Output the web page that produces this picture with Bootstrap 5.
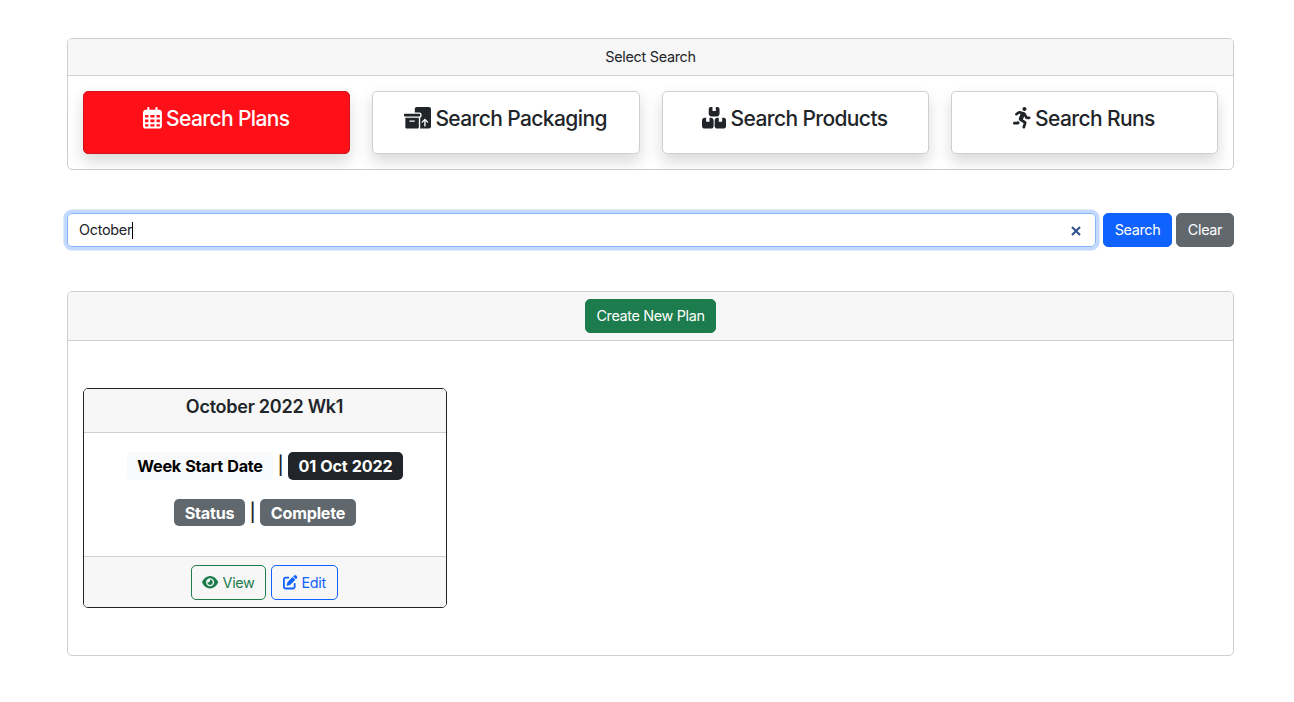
<!DOCTYPE html>
<html lang="en">
<head>
<meta charset="utf-8">
<meta name="viewport" content="width=device-width, initial-scale=1">
<title>Search Plans</title>
<link href="https://cdn.jsdelivr.net/npm/bootstrap@5.3.0/dist/css/bootstrap.min.css" rel="stylesheet">
<style>
  html { font-size: 14.4px; }
  body { font-family: Inter, "Liberation Sans", sans-serif; color: #212529; letter-spacing: -.02em; }
  .page { width: 1167px; margin-left: 67px; padding-top: 38px; }
  .card { --bs-card-border-color: #cfcfcf; --bs-card-cap-bg: #f7f7f7; --bs-card-border-radius: 5px; --bs-card-inner-border-radius: 4px; }
  .select-card { height: 132px; margin-bottom: 43px; }
  .select-card > .card-header { height: 37px; padding: 0; line-height: 36px; }
  .select-card > .card-body { padding: 15px; }
  .select-card .row { --bs-gutter-x: 22px; }
  .tile { height: 63px; padding-top: 14px; font-size: 21px; font-weight: 500; line-height: 26px; letter-spacing: -.029em; white-space: nowrap; box-shadow: 0 7.2px 14.4px rgba(0,0,0,.15); }
  .tile-active { background: #ff1018; color: #fff; border-color: #cf141b; }
  .tile svg { height: 21.6px; margin-top: 1px; fill: currentColor; flex: none; }
  .tile div { gap: 4.5px; padding-right: 1px; }
  .search-bar { gap: 4px; margin-bottom: 44px; }
  .btn { height: 34px; padding: 0; line-height: 32px; border-radius: 5px; letter-spacing: -.024em; transition: none; --bs-btn-font-size: 14.4px; }
  .btn-primary { --bs-btn-bg: #1062fe; --bs-btn-border-color: #1062fe; width: 69px; }
  .btn-secondary { --bs-btn-bg: #60686e; --bs-btn-border-color: #60686e; width: 58px; }
  .btn-success { --bs-btn-bg: #1d7c4d; --bs-btn-border-color: #1d7c4d; width: 131px; }
  .search-field { width: 1029px; height: 34px; margin-right: 3px; padding: 0 14px 0 11px; border: 1px solid #84b4fb; border-radius: 5px; box-shadow: 0 0 0 3.6px #c3d9fe; }
  .caret { width: 1px; height: 17px; margin-left: -.5px; background: #000; }
  .clear-mark { margin-top: 2px; }
  .results { height: 365px; }
  .results > .card-header { height: 49px; padding: 7px 0; }
  .results > .card-body { padding: 47px 15px; }
  .plan { width: 364px; height: 220px; border-color: #212529; }
  .plan .card-header { height: 44px; padding: 5px 1px 0 0; font-size: 18px; font-weight: 600; line-height: 26px; letter-spacing: -.014em; }
  .plan .card-body { padding: 19px 0 0; }
  .plan .card-footer { height: 51px; padding: 8px 2px 7px 0; gap: 5px; }
  .plan .btn { height: 35px; gap: 4px; padding-left: 1px; }
  .plan .btn svg { height: 14.4px; fill: currentColor; }
  .btn-outline-success { --bs-btn-color: #1d7c4d; --bs-btn-border-color: #1d7c4d; width: 75px; }
  .btn-outline-primary { --bs-btn-color: #1062fe; --bs-btn-border-color: #1062fe; width: 67px; }
  .tag-row { height: 28px; font-size: 18px; font-weight: 500; line-height: 28px; }
  .tag-row .badge { height: 28px; padding: 0; font-size: 16.2px; font-weight: 700; line-height: 28px; letter-spacing: -.014em; word-spacing: .04em; border-radius: 5px; }
  .tag-row .tag-gray { height: 27px; background: #60686e; }
  .tag-row .split { width: 15px; text-align: center; }
</style>
</head>
<body>
<main class="page">
  <section class="card select-card text-center">
    <div class="card-header">Select Search</div>
    <div class="card-body">
      <div class="row">
        <div class="col-3"><div class="card tile tile-active"><div class="d-flex justify-content-center">
          <svg viewBox="0 0 448 512"><path d="M152 64H296V24C296 10.75 306.7 0 320 0C333.3 0 344 10.75 344 24V64H384C419.3 64 448 92.65 448 128V448C448 483.3 419.3 512 384 512H64C28.65 512 0 483.3 0 448V128C0 92.65 28.65 64 64 64H104V24C104 10.75 114.7 0 128 0C141.3 0 152 10.75 152 24V64zM48 248H128V192H48V248zM48 296V360H128V296H48zM176 296V360H272V296H176zM320 296V360H400V296H320zM400 192H320V248H400V192zM400 408H320V464H384C392.8 464 400 456.8 400 448V408zM272 408H176V464H272V408zM128 408H48V448C48 456.8 55.16 464 64 464H128V408zM272 192H176V248H272V192z"/></svg>
          <span>Search Plans</span></div></div></div>
        <div class="col-3"><div class="card tile"><div class="d-flex justify-content-center">
          <svg viewBox="0 0 640 512"><path fill-rule="evenodd" d="M256 48C256 21 277 0 304 0H592C619 0 640 21 640 48V464C640 491 619 512 592 512H381C384 502 384 492 384 480V256C402 250 416 230 416 208V176C416 149 395 128 368 128H256ZM571 347L507 283C501 277 491 277 485 283L421 347C407 362 429 384 444 370L480 333V448C480 469 512 469 512 448V333L549 370C563 384 585 362 571 347ZM0 176C0 167 7 160 16 160H368C377 160 384 167 384 176V208C384 217 377 224 368 224H16C7 224 0 217 0 208ZM32 256H352V480C352 498 338 512 320 512H64C46 512 32 498 32 480ZM128 320V336C128 345 135 352 144 352H240C249 352 256 345 256 336V320Z"/></svg>
          <span>Search Packaging</span></div></div></div>
        <div class="col-3"><div class="card tile"><div class="d-flex justify-content-center">
          <svg viewBox="0 0 576 512"><path d="M248 0H208C182 0 160 22 160 48V160C160 195 189 224 224 224H352C387 224 416 195 416 160V48C416 22 394 0 368 0H328V80C328 89 321 96 312 96H264C255 96 248 89 248 80ZM64 256C29 256 0 285 0 320V448C0 483 29 512 64 512H212C247 512 276 483 276 448V320C276 285 247 256 212 256H178V336C178 345 171 352 162 352H114C105 352 98 345 98 336V256ZM364 256C329 256 300 285 300 320V448C300 483 329 512 364 512H512C547 512 576 483 576 448V320C576 285 547 256 512 256H478V336C478 345 471 352 462 352H414C405 352 398 345 398 336V256Z"/></svg>
          <span>Search Products</span></div></div></div>
        <div class="col-3"><div class="card tile"><div class="d-flex justify-content-center">
          <svg viewBox="0 0 416 512"><path d="M272 96c26.51 0 48-21.49 48-48S298.51 0 272 0s-48 21.49-48 48 21.49 48 48 48zM113.69 317.47l-14.8 34.52H32c-17.67 0-32 14.33-32 32s14.33 32 32 32h77.45c19.25 0 36.58-11.44 44.11-29.09l8.79-20.52-10.67-6.3c-17.32-10.23-30.06-25.37-37.99-42.61zM384 223.99h-44.03l-26.06-53.25c-12.5-25.55-35.45-44.23-61.78-50.94l-71.08-21.14c-28.3-6.8-57.77-.55-80.84 17.14l-39.67 30.41c-14.03 10.75-16.69 30.83-5.92 44.86s30.84 16.66 44.86 5.92l39.69-30.41c7.67-5.89 17.44-8 25.27-6.14l14.7 4.37-37.46 87.39c-12.62 29.48-1.31 64.01 26.3 80.31l84.98 50.17-27.47 87.73c-5.28 16.86 4.11 34.81 20.97 40.09 3.19 1 6.41 1.48 9.58 1.48 13.61 0 26.23-8.77 30.52-22.45l31.64-101.06c5.91-20.77-2.89-43.08-21.64-54.39l-61.24-36.14 31.31-78.28 20.27 41.43c8 16.34 24.92 26.89 43.11 26.89H384c17.67 0 32-14.33 32-32s-14.33-31.99-32-31.99z"/></svg>
          <span>Search Runs</span></div></div></div>
      </div>
    </div>
  </section>

  <div class="search-bar d-flex">
    <div class="search-field d-flex align-items-center" role="searchbox"><span>October</span><i class="caret"></i>
      <svg class="ms-auto clear-mark" width="10" height="10" viewBox="0 0 10 10" fill="none" stroke="#30528c" stroke-width="2.1"><path d="M1 1l8 8M9 1L1 9"/></svg>
    </div>
    <button class="btn btn-primary">Search</button>
    <button class="btn btn-secondary">Clear</button>
  </div>

  <section class="card results">
    <div class="card-header d-flex justify-content-center"><button class="btn btn-success">Create New Plan</button></div>
    <div class="card-body">
      <article class="card plan text-center">
        <div class="card-header">October 2022 Wk1</div>
        <div class="card-body">
          <div class="tag-row d-flex justify-content-center">
            <span class="badge text-black bg-light" style="width:146px">Week Start Date</span><span class="split">|</span><span class="badge bg-dark" style="width:115px">01 Oct 2022</span>
          </div>
          <div class="tag-row d-flex justify-content-center" style="margin-top:19px">
            <span class="badge tag-gray" style="width:71px">Status</span><span class="split">|</span><span class="badge tag-gray" style="width:96px">Complete</span>
          </div>
        </div>
        <div class="card-footer d-flex justify-content-center">
          <button class="btn btn-outline-success d-flex align-items-center justify-content-center"><svg viewBox="0 0 576 512"><path d="M279.6 160.4C282.4 160.1 285.2 160 288 160C341 160 384 202.1 384 256C384 309 341 352 288 352C234.1 352 192 309 192 256C192 253.2 192.1 250.4 192.4 247.6C201.7 252.1 212.5 256 224 256C259.3 256 288 227.3 288 192C288 180.5 284.1 169.7 279.6 160.4zM480.6 112.6C527.4 156 558.7 207.1 573.5 243.7C576.8 251.6 576.8 260.4 573.5 268.3C558.7 304 527.4 355.1 480.6 399.4C433.5 443.2 368.8 480 288 480C207.2 480 142.5 443.2 95.42 399.4C48.62 355.1 17.34 304 2.461 268.3C-.8205 260.4-.8205 251.6 2.461 243.7C17.34 207.1 48.62 156 95.42 112.6C142.5 68.84 207.2 32 288 32C368.8 32 433.5 68.84 480.6 112.6zM288 112C208.5 112 144 176.5 144 256C144 335.5 208.5 400 288 400C367.5 400 432 335.5 432 256C432 176.5 367.5 112 288 112z"/></svg><span>View</span></button>
          <button class="btn btn-outline-primary d-flex align-items-center justify-content-center"><svg viewBox="0 0 512 512"><path d="M490.3 40.4C512.2 62.27 512.2 97.73 490.3 119.6L460.3 149.7L362.3 51.72L392.4 21.66C414.3-.2135 449.7-.2135 471.6 21.66L490.3 40.4zM172.4 241.7L339.7 74.34L437.7 172.3L270.3 339.6C264.2 345.8 256.7 350.4 248.4 353.2L159.6 382.8C150.1 385.6 141.5 383.4 135 376.1C128.6 370.5 126.4 361 129.2 352.4L158.8 263.6C161.6 255.3 166.2 247.8 172.4 241.7V241.7zM192 63.1C209.7 63.1 224 78.33 224 95.1C224 113.7 209.7 127.1 192 127.1H96C78.33 127.1 64 142.3 64 159.1V416C64 433.7 78.33 448 96 448H352C369.7 448 384 433.7 384 416V319.1C384 302.3 398.3 287.1 416 287.1C433.7 287.1 448 302.3 448 319.1V416C448 469 405 512 352 512H96C42.98 512 0 469 0 416V159.1C0 106.1 42.98 63.1 96 63.1H192z"/></svg><span>Edit</span></button>
        </div>
      </article>
    </div>
  </section>
</main>
<script src="https://cdn.jsdelivr.net/npm/bootstrap@5.3.0/dist/js/bootstrap.bundle.min.js"></script>
</body>
</html>
